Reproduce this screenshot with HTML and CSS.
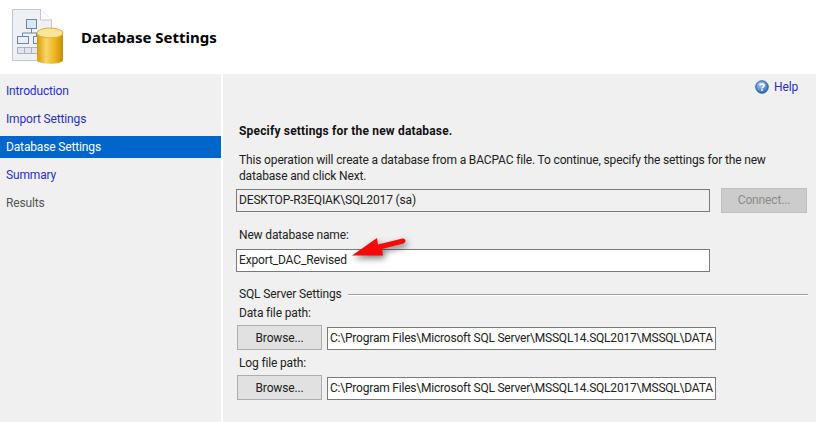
FILE: index.html
```html
<!DOCTYPE html>
<html lang="en">
<head>
    <meta charset="UTF-8">
    <meta name="viewport" content="width=device-width, initial-scale=1.0">
    <title>Database Settings</title>
    <link rel="stylesheet" href="styles.css">
</head>
<body>

    <!-- Header -->
    <header class="banner">
        <svg class="banner-icon" width="58" height="60" viewBox="0 0 58 60">
            <defs>
                <linearGradient id="cylBody" x1="0" x2="1" y1="0" y2="0">
                    <stop offset="0" stop-color="#d99a06"/>
                    <stop offset="0.35" stop-color="#f7d66a"/>
                    <stop offset="0.7" stop-color="#eeb31c"/>
                    <stop offset="1" stop-color="#c98c08"/>
                </linearGradient>
            </defs>
            <path d="M5.500 2.500H33.500L44.500 13V53.500H5.500Z" fill="#eef0f4" stroke="#c4c6ca"/>
            <path d="M33.500 2.500V13H44.500" fill="#fff" stroke="#c4c6ca"/>
            <rect x="19.500" y="12.500" width="10" height="9" fill="#dbe7f5" stroke="#6f86a5"/>
            <path d="M24.500 22V26M15.500 26H32M15.500 26V29M29.500 26V29" stroke="#6f86a5" fill="none"/>
            <rect x="10.500" y="29.500" width="11" height="7" fill="#e6eef8" stroke="#6f86a5"/>
            <rect x="26.500" y="29.500" width="8" height="7" fill="#e6eef8" stroke="#6f86a5"/>
            <path d="M10.500 40.500H30.500V46.500H10.500ZM17.500 40.500V46.500M24.500 40.500V46.500" fill="#e2e6ec" stroke="#a9b2bf"/>
            <path d="M30 26V53C30 58 56 58 56 53V26Z" fill="url(#cylBody)"/>
            <ellipse cx="43" cy="26" rx="13" ry="5" fill="#f9e59a" stroke="#e1b02c"/>
        </svg>
        <h1 class="banner-title">Database Settings</h1>
    </header>

    <div class="wizard">
        <!-- Steps -->
        <nav class="steps">
            <a class="step">Introduction</a>
            <a class="step">Import Settings</a>
            <a class="step step-active">Database Settings</a>
            <a class="step">Summary</a>
            <a class="step step-off">Results</a>
        </nav>

        <!-- Settings -->
        <main class="panel">
            <div class="help-row">
                <svg class="help-icon" width="14" height="14" viewBox="0 0 14 14">
                    <defs>
                        <radialGradient id="helpBall" cx="0.4" cy="0.3" r="0.8">
                            <stop offset="0" stop-color="#a9cdf2"/>
                            <stop offset="1" stop-color="#1f5fae"/>
                        </radialGradient>
                    </defs>
                    <circle cx="7" cy="7" r="6.300" fill="url(#helpBall)" stroke="#1c4f93" stroke-width="0.800"/>
                    <path d="M4.800 5.400C5 3.600 9.200 3.500 9.200 5.500C9.200 6.900 7 6.800 7 8.400" fill="none" stroke="#fff" stroke-width="1.500"/>
                    <rect x="6.200" y="9.300" width="1.600" height="1.600" fill="#fff"/>
                </svg>
                <a class="help-link">Help</a>
            </div>

            <h2 class="panel-title">Specify settings for the new database.</h2>
            <p class="panel-text">This operation will create a database from a BACPAC file. To continue, specify the settings for the new database and click Next.</p>

            <div class="server-row">
                <div class="field field-readonly server-field">DESKTOP-R3EQIAK\SQL2017 (sa)</div>
                <button class="btn btn-disabled connect-btn" type="button">Connect...</button>
            </div>

            <label class="name-label">New database name:</label>
            <div class="field name-field">Export_DAC_Revised</div>

            <div class="group-head">
                <span>SQL Server Settings</span>
                <span class="group-line"></span>
            </div>

            <label class="path-label">Data file path:</label>
            <div class="path-row">
                <button class="btn browse-btn" type="button">Browse...</button>
                <div class="field path-field">C:\Program Files\Microsoft SQL Server\MSSQL14.SQL2017\MSSQL\DATA</div>
            </div>

            <label class="path-label path-label-log">Log file path:</label>
            <div class="path-row">
                <button class="btn browse-btn" type="button">Browse...</button>
                <div class="field path-field">C:\Program Files\Microsoft SQL Server\MSSQL14.SQL2017\MSSQL\DATA</div>
            </div>

            <!-- Red arrow drawn over the form -->
            <svg class="callout-arrow" width="60" height="30" viewBox="0 0 60 30">
                <path d="M2 20.500L27 3L28 9.500L52.500 3.500C56 3 56.500 7.500 53.500 8.500L32 14L33 20.500Z" fill="#f80808"/>
            </svg>
        </main>
    </div>

</body>
</html>
```

FILE: styles.css
```css
body {
    font-family: 'Roboto', 'Noto Sans', sans-serif;
    font-size: 12px;
    letter-spacing: -0.15px;
    margin: 0;
    padding: 0;
    color: #222;
    background-color: #fff;
    height: 422px;
    overflow: hidden;
}

/* Header */
.banner {
    display: flex;
    align-items: center;
    height: 74px;
    padding-left: 7px;
    box-sizing: border-box;
}

.banner-title {
    font-family: 'Noto Sans', sans-serif;
    font-size: 15px;
    font-weight: 700;
    letter-spacing: 0;
    color: #000;
    margin: 0 0 0 16px;
}

.wizard {
    display: flex;
    height: 348px;
}

/* Left steps */
.steps {
    width: 221px;
    padding-top: 6px;
    background-color: #f0f0f0;
    box-sizing: border-box;
    margin-right: 2px;
    display: flex;
    flex-direction: column;
    flex-shrink: 0;
}

.step {
    display: block;
    height: 22px;
    line-height: 22px;
    margin-bottom: 6px;
    padding-left: 6px;
    color: #2a2ec8;
}

.step-active {
    background-color: #0066cc;
    color: #fff;
}

.step-off {
    color: #555;
}

/* Right panel */
.panel {
    position: relative;
    flex: 1;
    background-color: #f0f0f0;
    padding: 0 8px 0 16px;
}

.help-row {
    display: flex;
    justify-content: flex-end;
    align-items: center;
    gap: 5px;
    height: 26px;
    padding: 0 11px 0 0;
}

.help-link {
    color: #2a2ec8;
}

.panel-title {
    font-size: 12px;
    font-weight: 700;
    letter-spacing: 0.18px;
    color: #111;
    margin: 23px 0 0 0;
    line-height: 16px;
}

.panel-text {
    margin: 13px 0 0 0;
    line-height: 16px;
    width: 570px;
}

.field {
    border: 1px solid #7a7a7a;
    background-color: #fff;
    height: 23px;
    line-height: 21px;
    padding-left: 2px;
    box-sizing: border-box;
    white-space: nowrap;
    overflow: hidden;
}

.field-readonly {
    background-color: #f0f0f0;
}

.btn {
    font-family: inherit;
    font-size: 12px;
    letter-spacing: inherit;
    height: 25px;
    padding: 0;
    background-color: #e1e1e1;
    border: 1px solid #adadad;
    color: #222;
}

.btn-disabled {
    background-color: #cccccc;
    border-color: #bfbfbf;
    color: #8b8b8b;
}

.server-row {
    display: flex;
    align-items: center;
    margin: 4px 0 0 -3px;
}

.server-field {
    width: 474px;
}

.connect-btn {
    width: 86px;
    margin-left: 11px;
    padding-bottom: 2px;
}

.name-label {
    display: block;
    margin-top: 14px;
    line-height: 16px;
}

.name-field {
    width: 474px;
    margin: 6px 0 0 -3px;
}

.group-head {
    display: flex;
    align-items: center;
    gap: 6px;
    margin-top: 14px;
    padding-right: 1px;
    line-height: 16px;
}

.group-line {
    flex: 1;
    height: 1px;
    background-color: #a0a0a0;
    box-shadow: 0 1px 0 #fff;
}

.path-label {
    display: block;
    margin-top: 3px;
    line-height: 16px;
}

.path-label-log {
    margin-top: 5px;
}

.path-row {
    display: flex;
    align-items: flex-end;
    margin: 4px 0 0 -2px;
}

.browse-btn {
    width: 85px;
    flex-shrink: 0;
}

.path-field {
    width: 389px;
    margin-left: 5px;
    letter-spacing: -0.21px;
}

.callout-arrow {
    position: absolute;
    left: 127px;
    top: 161px;
    filter: drop-shadow(2px 3px 3px rgba(0, 0, 0, 0.5));
}
```
